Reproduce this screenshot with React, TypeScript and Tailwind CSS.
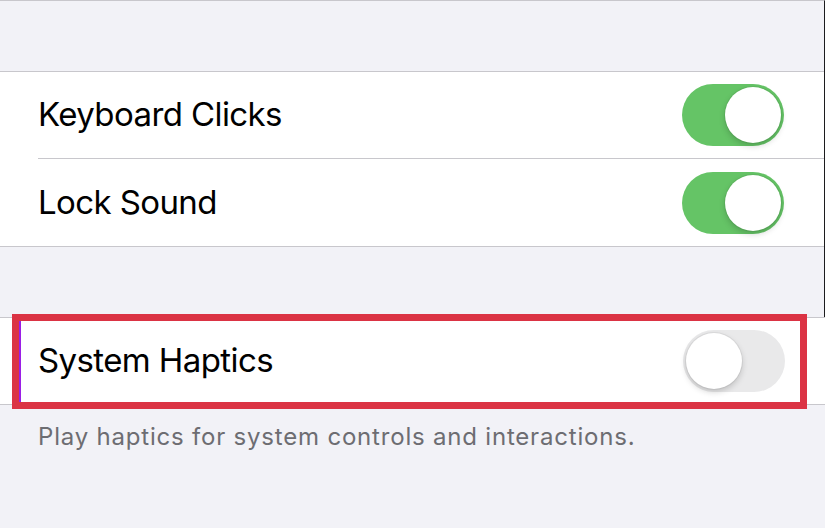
import React from "react";

function Toggle({ on }: { on: boolean }) {
  return (
    <div
      className={
        "relative w-[102px] h-[62px] rounded-full shrink-0 " +
        (on ? "bg-[#65c466]" : "bg-[#e9e9ea]")
      }
    >
      <div
        className={
          "absolute top-[3px] w-[56px] h-[56px] rounded-full bg-white shadow-[0_3px_6px_rgba(0,0,0,0.18),0_0_0_1px_rgba(0,0,0,0.05)] " +
          (on ? "right-[3px]" : "left-[3px]")
        }
      />
    </div>
  );
}

function Row({ label, on, h }: { label: string; on: boolean; h: string }) {
  return (
    <div className={"flex items-center justify-between pl-[38px] pr-[40px] " + h}>
      <span className="text-[33px] text-black tracking-[-0.6px]">{label}</span>
      <Toggle on={on} />
    </div>
  );
}

export default function App() {
  return (
    <div
      className="relative w-[825px] h-[528px] bg-[#f2f2f7] overflow-hidden"
      style={{ fontFamily: "Inter, 'Noto Sans', sans-serif" }}
    >
      <div className="border-t border-[#c8c7cc] border-r border-r-[#1c1c1e]">
        <div className="h-[70px]" />
        <div className="bg-white border-y border-[#c8c7cc]">
          <Row label="Keyboard Clicks" on={true} h="h-[86px]" />
          <div className="ml-[38px] h-px bg-[#c8c7cc]" />
          <Row label="Lock Sound" on={true} h="h-[87px]" />
        </div>
        <div className="h-[70px]" />
      </div>
      <div className="bg-white border-y border-[#c8c7cc]">
        <Row label="System Haptics" on={false} h="h-[86px]" />
      </div>
      <div className="pl-[38px] pt-[14px] text-[24px] leading-[36px] text-[#6d6d72] tracking-[0.8px]">
        Play haptics for system controls and interactions.
      </div>
      <div className="absolute left-[12px] top-[314px] w-[795px] h-[95px] border-[7px] border-[#db3344]">
        <div className="absolute left-0 top-0 bottom-0 w-[2px] bg-[#9a1ee6]" />
      </div>
    </div>
  );
}
